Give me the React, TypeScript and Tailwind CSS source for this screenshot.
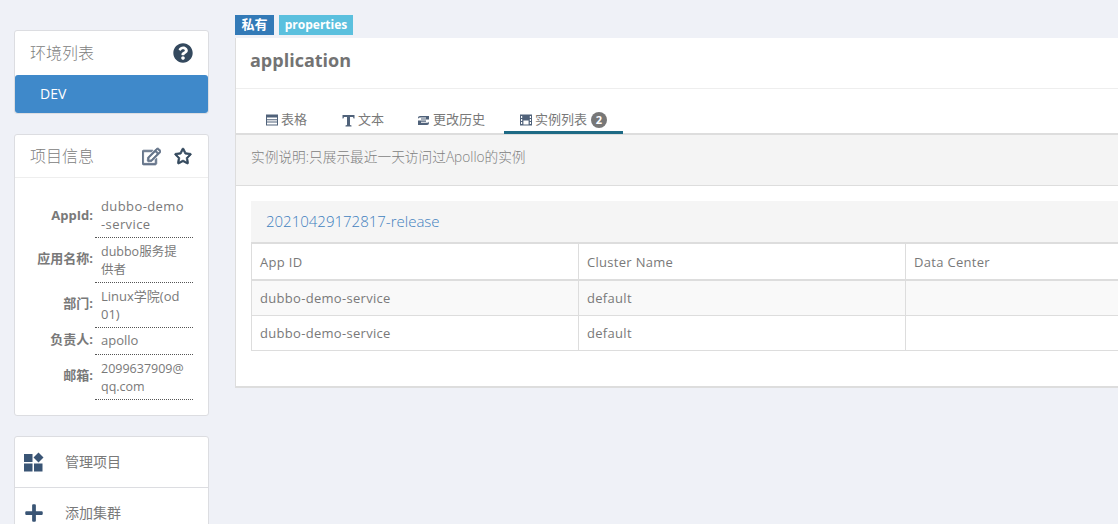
import { FaQuestionCircle, FaRegEdit, FaRegStar, FaPlus } from "react-icons/fa";

const font = "font-['Open_Sans','Noto_Sans_CJK_SC',sans-serif]";

const infoRows = [
  { label: "AppId:", lines: ["dubbo-demo", "-service"], rowClass: "h-[42px]", textClass: "pb-[3px] text-[13px] tracking-[0.4px]" },
  { label: "应用名称:", lines: ["dubbo服务提", "供者"], rowClass: "h-[45px]", textClass: "pt-[2px] text-[12.5px]" },
  { label: "部门:", lines: ["Linux学院(od", "01)"], rowClass: "h-[45px]", textClass: "text-[13px]" },
  { label: "负责人:", lines: ["apollo"], rowClass: "h-[27px]", textClass: "pb-[2px] text-[13px]" },
  { label: "邮箱:", lines: ["2099637909@", "qq.com"], rowClass: "h-[45px]", textClass: "pt-[2px] text-[12.5px]" },
];

const tableRows = ["bg-[#f9f9f9]", "bg-white"];

function ManageIcon() {
  return (
    <svg width="20" height="20" viewBox="0 0 20 20" className="fill-[#3a5575]">
      <rect x="0" y="2" width="8.5" height="8" />
      <rect x="0" y="11.5" width="8.5" height="8" />
      <rect x="10" y="11.5" width="8.5" height="8" />
      <path d="M14.5 0.5 L19.5 5.5 L14.5 10.5 L9.5 5.5 Z" />
    </svg>
  );
}

function TableIcon() {
  return (
    <svg width="12" height="12" viewBox="0 0 12 12" className="fill-[#50627a]">
      <path d="M0 0.5 H12 V11.5 H0 Z M1 3.5 V5.2 H11 V3.5 Z M1 6.2 V7.6 H11 V6.2 Z M1 8.6 V10.5 H11 V8.6 Z" fillRule="evenodd" />
    </svg>
  );
}

function FilmIcon() {
  return (
    <svg width="12" height="12" viewBox="0 0 12 12" className="fill-[#50627a]">
      <path
        d="M0 0.5 H12 V11.5 H0 Z M1 2 V4 H2.2 V2 Z M9.8 2 V4 H11 V2 Z M1 5 V7 H2.2 V5 Z M9.8 5 V7 H11 V5 Z M1 8 V10 H2.2 V8 Z M9.8 8 V10 H11 V8 Z M3.4 6.5 V10.5 H8.6 V6.5 Z"
        fillRule="evenodd"
      />
    </svg>
  );
}

function TextIcon() {
  return (
    <svg width="13" height="13" viewBox="0 0 13 13" className="fill-[#50627a]">
      <path d="M0.5 1 H12.5 V4.5 H11.6 L11 3 H8 V11 L9.5 11.6 V12.5 H3.5 V11.6 L5 11 V3 H2 L1.4 4.5 H0.5 Z" />
    </svg>
  );
}

function HistoryIcon() {
  return (
    <svg width="11" height="9" viewBox="0 0 11 9" className="fill-[#50627a]">
      <path d="M2 0 H11 V3.6 H3 V2.6 H8 V1.6 H2 Q0 1.6 0 3.2 V1.6 Q0 0 2 0 Z" />
      <path d="M0 4.6 H8 V5.8 H3 V6.8 H9 Q11 6.8 11 5.4 V7 Q11 9 9 9 H0 Z" />
    </svg>
  );
}

export default function App() {
  return (
    <div className={`${font} flex h-[524px] w-[1118px] overflow-hidden bg-[#eff1f7] text-[13px] text-[#797979]`}>
      {/* Sidebar */}
      <div className="ml-[14px] flex w-[195px] shrink-0 flex-col pt-[30px]">
        <div className="shrink-0 rounded-[3px] border border-[#dcdde1] bg-white">
          <div className="flex h-[44px] items-center justify-between pl-[15px] pr-[15px]">
            <span className="text-[16px] font-light text-[#808080]">环境列表</span>
            <FaQuestionCircle className="text-[20px] text-[#34495e]" />
          </div>
          <div className="flex h-[38px] items-center rounded-[3px] bg-[#3f89ca] pb-[2px] pl-[25px] text-[14px] text-white">
            DEV
          </div>
        </div>

        <div className="mt-[20px] h-[282px] shrink-0 rounded-[3px] border border-[#dcdde1] bg-white">
          <div className="flex h-[43px] items-center justify-between border-b border-[#eeeeee] pl-[15px] pr-[16px]">
            <span className="text-[16px] font-light text-[#808080]">项目信息</span>
            <div className="flex items-center gap-[13px]">
              <FaRegEdit stroke="currentColor" strokeWidth={24} className="ml-[1px] text-[19px] text-[#65758a]" />
              <FaRegStar stroke="currentColor" strokeWidth={24} className="text-[18px] text-[#34495e]" />
            </div>
          </div>
          <div className="pt-[18px]">
            {infoRows.map((row) => (
              <div key={row.label} className={`flex ${row.rowClass}`}>
                <div className="flex w-[78px] shrink-0 items-center justify-end pb-[3px] text-[13px] font-bold text-[#797979]">
                  {row.label}
                </div>
                <div className={`ml-[2px] flex w-[98px] flex-col justify-center border-b border-dotted border-[#555555] pl-[6px] leading-[18px] ${row.textClass}`}>
                  {row.lines.map((line) => (
                    <span key={line} className="whitespace-nowrap">
                      {line}
                    </span>
                  ))}
                </div>
              </div>
            ))}
          </div>
        </div>

        <div className="mt-[20px] shrink-0 rounded-[3px] border border-[#dcdde1] bg-white text-[14px]">
          <div className="flex h-[51px] items-center border-b border-[#dcdde1] pl-[9px]">
            <ManageIcon />
            <span className="mb-[2px] ml-[21px]">管理项目</span>
          </div>
          <div className="flex h-[50px] items-center pl-[9px]">
            <FaPlus className="text-[20px] text-[#3a5575]" />
            <span className="mb-[2px] ml-[21px]">添加集群</span>
          </div>
        </div>
      </div>

      {/* Main */}
      <div className="ml-[26px] min-w-0 flex-1 pt-[15px]">
        <div className="flex h-[20px] gap-[5px] text-[12px] font-bold text-white">
          <span className="flex w-[39px] items-center justify-center bg-[#337ab7] text-[13px]">私有</span>
          <span className="flex w-[74px] items-center justify-center bg-[#5bc0de]">properties</span>
        </div>

        <div className="mt-[3px] h-[350px] border-b-2 border-l border-[#dddddd] bg-white">
          <div className="flex h-[51px] items-center border-b border-[#eeeeee] pb-[5px] pl-[14px] text-[18px] font-bold text-[#737373]">
            application
          </div>

          <div className="flex h-[46px] items-end border-b-2 border-[#dddddd] pl-[15px]">
            <div className="flex h-[29px] w-[88px] items-start gap-[3px] pl-[15px] pt-[6px]">
              <span className="mt-[4px]">
                <TableIcon />
              </span>
              <span>表格</span>
            </div>
            <div className="flex h-[29px] w-[76px] items-start gap-[3px] pl-[3px] pt-[6px]">
              <span className="mt-[4px]">
                <TextIcon />
              </span>
              <span>文本</span>
            </div>
            <div className="flex h-[29px] w-[86px] items-start gap-[4px] pl-[3px] pt-[6px]">
              <span className="mt-[6px]">
                <HistoryIcon />
              </span>
              <span>更改历史</span>
            </div>
            <div className="-mb-[1px] ml-[3px] flex h-[30px] w-[119px] items-start gap-[3px] border-b-[3px] border-[#1d6a85] pl-[16px] pt-[6px]">
              <span className="mt-[4px]">
                <FilmIcon />
              </span>
              <span className="mr-[1px]">实例列表</span>
              <span className="mt-[2px] flex h-[16px] w-[16px] items-center justify-center rounded-full bg-[#777777] text-[11px] font-bold text-white">
                2
              </span>
            </div>
          </div>

          <div className="flex h-[51px] items-center border-b border-[#dddddd] bg-[#f4f4f4] pb-[6px] pl-[15px] text-[13.7px] font-light text-[#808080]">
            实例说明:只展示最近一天访问过Apollo的实例
          </div>

          <div className="pl-[15px] pt-[15px]">
            <div className="flex h-[43px] items-center border-b-2 border-[#dddddd] bg-[#f5f5f5] pl-[15px] text-[15px] font-light text-[#3f7fbe]">
              20210429172817-release
            </div>
            <table className="w-[900px] table-fixed border-collapse text-[13px] tracking-[0.3px]">
              <thead>
                <tr className="h-[36px] border-b-2 border-[#dddddd] text-left">
                  <th className="w-[327px] border-x border-[#dddddd] pl-[8px] pt-[2px] font-normal">App ID</th>
                  <th className="w-[327px] border-x border-[#dddddd] pl-[8px] pt-[2px] font-normal">Cluster Name</th>
                  <th className="border-x border-[#dddddd] pl-[8px] pt-[2px] font-normal">Data Center</th>
                </tr>
              </thead>
              <tbody>
                {tableRows.map((bg) => (
                  <tr key={bg} className={`h-[35px] border-b border-[#dddddd] ${bg}`}>
                    <td className="border-x border-[#dddddd] pl-[8px] pt-[2px]">dubbo-demo-service</td>
                    <td className="border-x border-[#dddddd] pl-[8px] pt-[2px]">default</td>
                    <td className="border-x border-[#dddddd] pl-[8px]"></td>
                  </tr>
                ))}
              </tbody>
            </table>
          </div>
        </div>
      </div>
    </div>
  );
}
